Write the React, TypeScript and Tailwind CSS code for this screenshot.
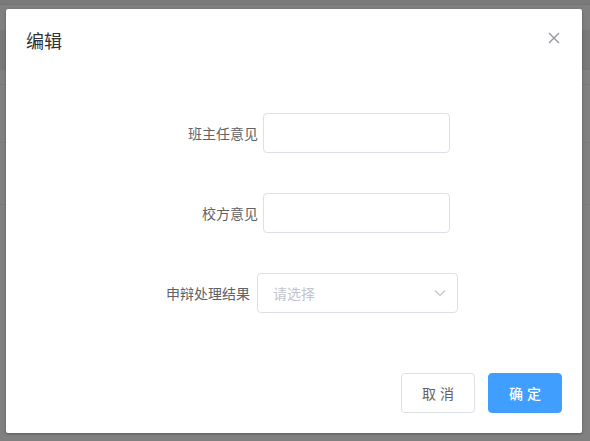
export default function App() {
  return (
    <div className="relative w-[590px] h-[441px] overflow-hidden bg-[#808080] [font-family:'Noto_Sans_CJK_SC','Noto_Sans',sans-serif]">
      {/* page behind the mask */}
      <div className="flex flex-col">
        <div className="h-[5px] bg-[#7a7a7a] border-b border-[#747474]" />
        <div className="h-[25px]" />
        <div className="h-[40px] bg-[#787878] border-b border-[#767676]" />
        <div className="h-[15px] border-b border-[#797979]" />
        <div className="h-[58px] border-b border-[#7a7a7a]" />
        <div className="h-[62px] border-b border-[#7a7a7a]" />
      </div>

      {/* dialog */}
      <div className="absolute left-[6px] top-[9px] w-[576px] h-[424px] bg-white rounded-[2px] shadow-[0_1px_3px_rgba(0,0,0,0.3)] flex flex-col">
        <div className="px-[20px] pt-[19px]">
          <span className="text-[18px] leading-[24px] text-[#303133]">编辑</span>
        </div>
        <button className="absolute top-[21px] right-[20px] w-[16px] h-[16px] text-[#909399]">
          <svg viewBox="0 0 16 16" width="16" height="16" fill="none" stroke="currentColor" strokeWidth="1.3">
            <path d="M3 3 L13 13 M13 3 L3 13" />
          </svg>
        </button>

        <div className="mt-[60px] flex flex-col gap-[40px] text-[14px] text-[#606266]">
          <div className="flex items-center h-[40px]">
            <label className="ml-[152px] w-[100px] text-right">班主任意见</label>
            <div className="ml-[5px] w-[187px] h-[40px] rounded-[4px] border border-[#dcdfe6]" />
          </div>
          <div className="flex items-center h-[40px]">
            <label className="ml-[152px] w-[100px] text-right">校方意见</label>
            <div className="ml-[5px] w-[187px] h-[40px] rounded-[4px] border border-[#dcdfe6]" />
          </div>
          <div className="flex items-center h-[40px]">
            <label className="ml-[144px] w-[100px] text-right">申辩处理结果</label>
            <div className="ml-[7px] w-[201px] h-[40px] rounded-[4px] border border-[#dcdfe6] flex items-center justify-between pl-[15px] pr-[11px]">
              <span className="text-[#c0c4cc]">请选择</span>
              <svg width="12" height="8" viewBox="0 0 12 8" fill="none" stroke="#c0c4cc" strokeWidth="1.2">
                <path d="M1 1.5 L6 6.5 L11 1.5" />
              </svg>
            </div>
          </div>
        </div>

        <div className="mt-auto flex justify-end gap-[13px] px-[20px] pb-[20px]">
          <button className="w-[74px] h-[40px] rounded-[4px] border border-[#dcdfe6] bg-white text-[14px] text-[#606266] flex items-center justify-center gap-[4px]">
            <span>取</span>
            <span>消</span>
          </button>
          <button className="w-[74px] h-[40px] rounded-[4px] border border-[#409eff] bg-[#409eff] text-[14px] font-medium text-white flex items-center justify-center gap-[4px]">
            <span>确</span>
            <span>定</span>
          </button>
        </div>
      </div>
    </div>
  );
}
